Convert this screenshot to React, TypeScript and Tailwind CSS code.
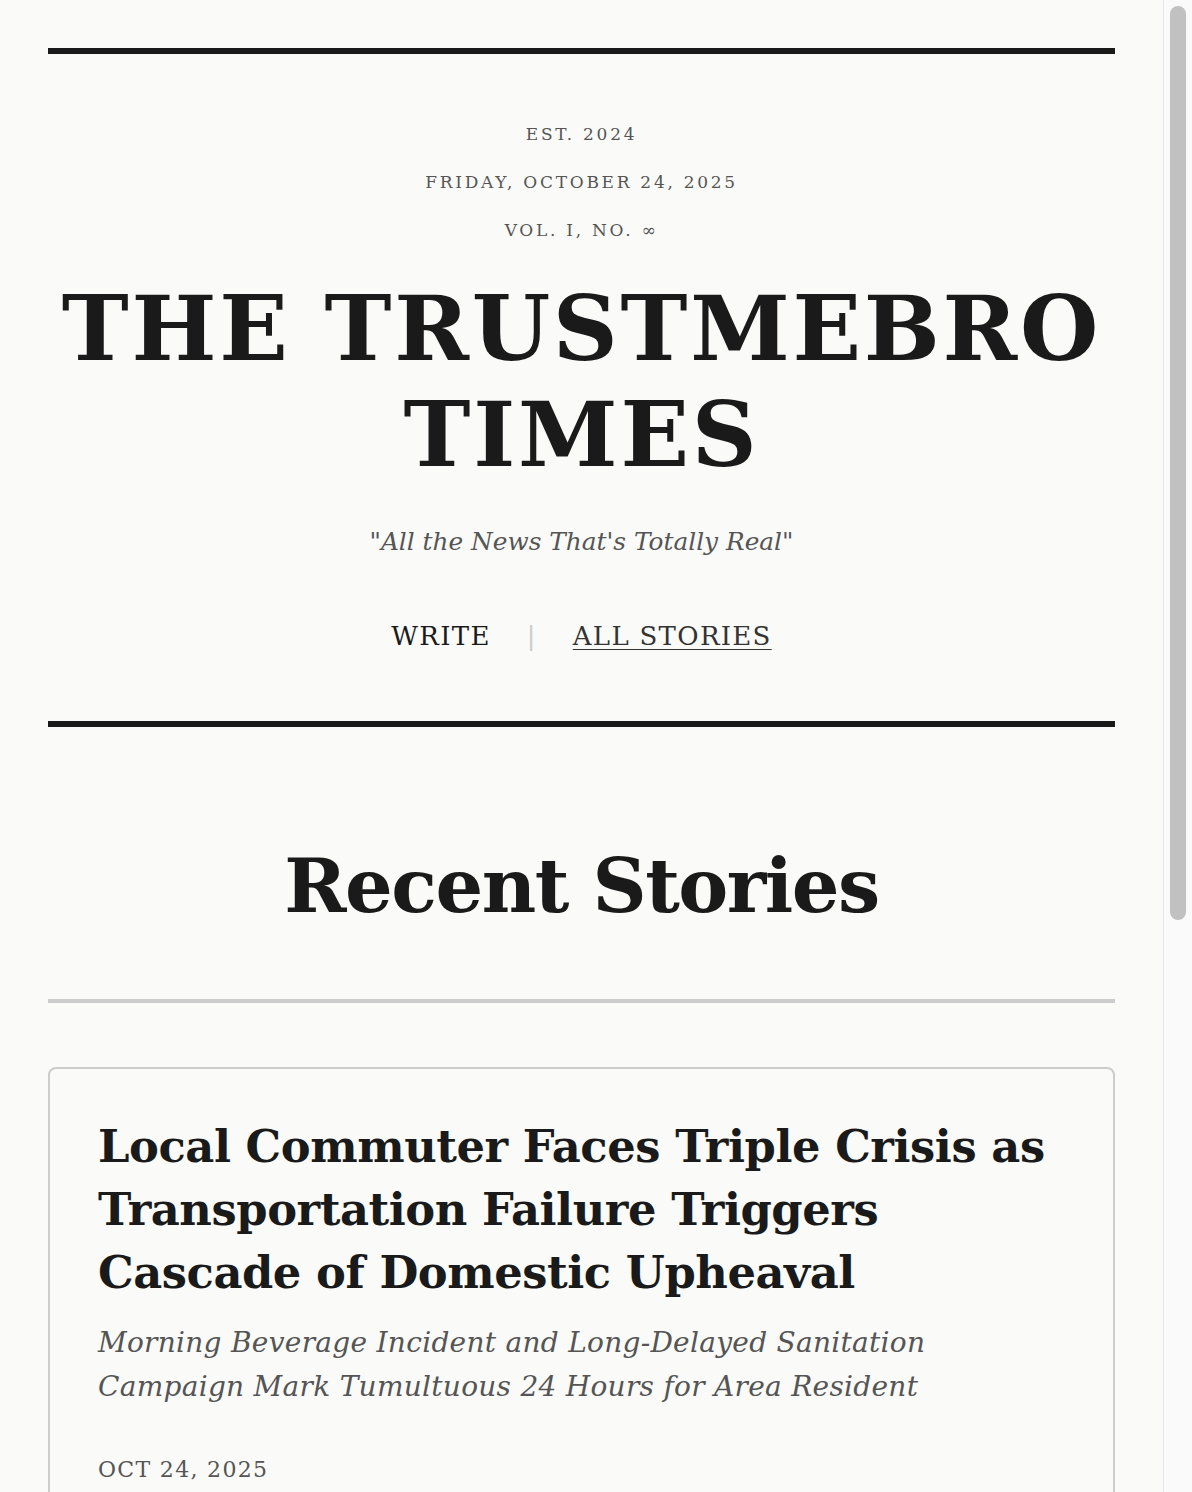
import React from "react"

const serif = "font-['DejaVu_Serif',serif]"

const stories = [
	{
		title: "Local Commuter Faces Triple Crisis as Transportation Failure Triggers Cascade of Domestic Upheaval",
		dek: "Morning Beverage Incident and Long-Delayed Sanitation Campaign Mark Tumultuous 24 Hours for Area Resident",
		date: "Oct 24, 2025",
	},
]

const Masthead = () => {
	return (
		<header className="border-t-[6px] border-b-[6px] border-[#1a1a1a] text-center">
			<div className="pt-[68px] flex flex-col gap-6 text-[17px] leading-6 uppercase tracking-[0.16em] text-[#555]">
				<p>Est. 2024</p>
				<p>Friday, October 24, 2025</p>
				<p>Vol. I, No. ∞</p>
			</div>
			<h1 className="mt-[34px] text-[90px] leading-[105.6px] font-bold uppercase text-[#1a1a1a] tracking-[0.03em]">
				The Trustmebro Times
			</h1>
			<p className="mt-[37px] text-[24.8px] leading-9 italic text-[#555]">
				"All the News That's Totally Real"
			</p>
			<nav className="mt-[61px] pb-[70px] flex justify-center items-center gap-9 text-[26px] leading-[30px] uppercase tracking-[0.05em]">
				<a className="text-[#1a1a1a]">Write</a>
				<span className="text-[#ccc]">|</span>
				<a className="text-[#333] underline underline-offset-4 decoration-1">All Stories</a>
			</nav>
		</header>
	)
}

const StoryCard = (props: { title: string; dek: string; date: string }) => {
	const { title, dek, date } = props
	return (
		<article className="border-2 border-[#ccc] rounded-lg p-12">
			<h3 className="text-[44.8px] leading-[1.4] font-bold tracking-[-0.01em] text-[#1a1a1a] -mt-px">
				{title}
			</h3>
			<p className="mt-[17px] max-w-[900px] text-[28px] leading-[44px] italic tracking-[0.01em] text-[#555]">
				{dek}
			</p>
			<p className="mt-[46px] text-[22px] leading-[30px] uppercase tracking-[0.06em] text-[#555]">
				{date}
			</p>
		</article>
	)
}

const ScrollRail = () => {
	return (
		<aside className="w-[29px] shrink-0 border-l border-[#e8e8e8] bg-[#fafafa]">
			<div className="ml-[6px] mt-[6px] w-4 h-[914px] rounded-full bg-[#c1c1c1]" />
		</aside>
	)
}

export default function App() {
	return (
		<div className="h-screen flex overflow-hidden bg-[#fafaf9]">
			<div className="flex-1 overflow-y-auto">
				<div className={`${serif} min-h-[2404px] px-12 pt-12 text-[#1a1a1a]`}>
					<Masthead />
					<main>
						<h2 className="mt-[111px] text-center text-[75px] leading-[96px] font-bold tracking-[-0.02em] text-[#1a1a1a]">
							Recent Stories
						</h2>
						<div className="mt-[65px] h-1 bg-[#ccc]" />
						<div className="mt-16 flex flex-col gap-8">
							{stories.map((s) => (
								<StoryCard key={s.title} {...s} />
							))}
						</div>
					</main>
				</div>
			</div>
			<ScrollRail />
		</div>
	)
}
